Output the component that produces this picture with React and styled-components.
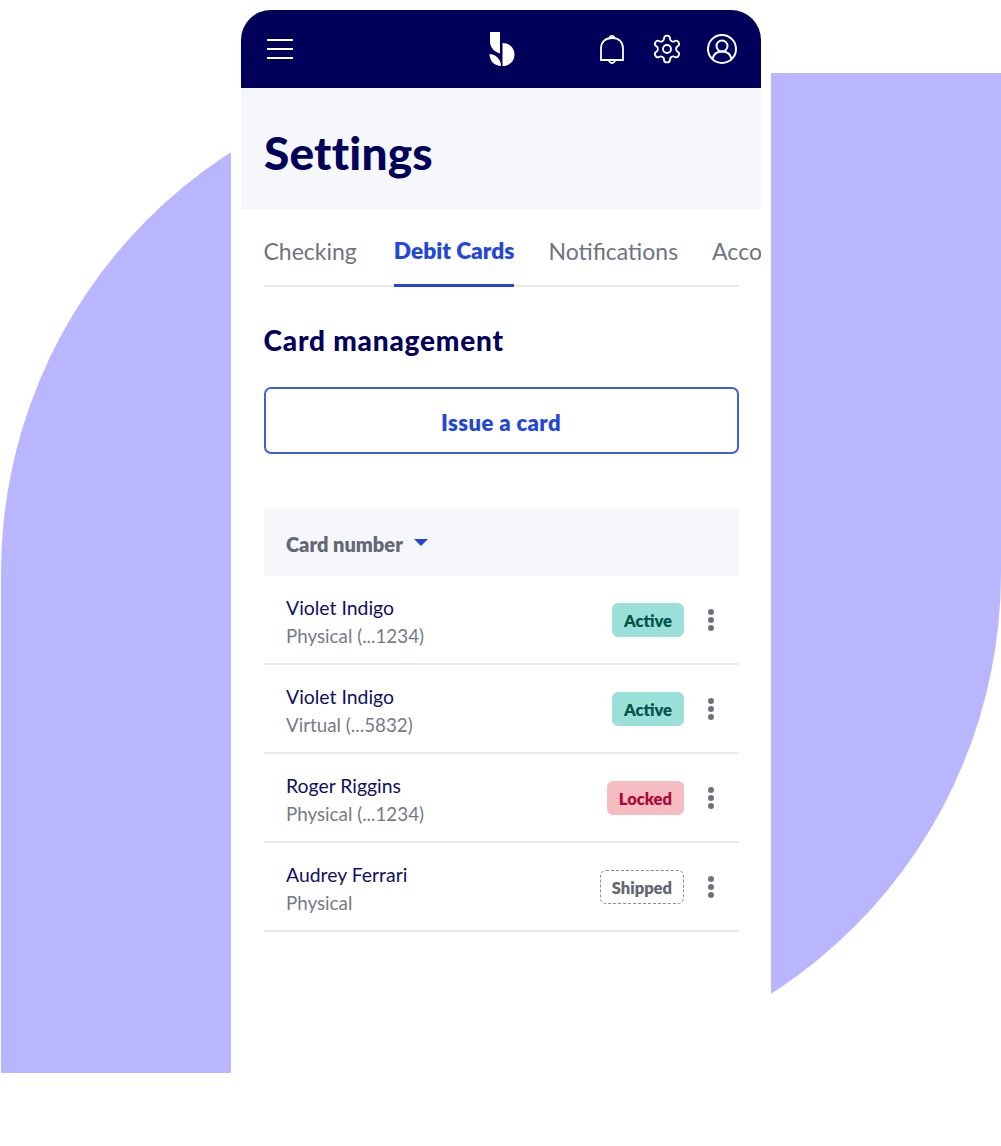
import React from "react";
import styled, { createGlobalStyle } from "styled-components";

const GlobalStyle = createGlobalStyle`
  html, body {
    margin: 0;
    padding: 0;
    background: #fff;
    font-family: "Lato", "Liberation Sans", sans-serif;
  }
`;

const Stage = styled.div`
  position: relative;
  width: 1001px;
  height: 1146px;
  overflow: hidden;
  background: #fff;
`;

const Blob = styled.div`
  position: absolute;
  left: 1px;
  top: 73px;
  width: 1000px;
  height: 1000px;
  border-radius: 500px 0 500px 0;
  background: #b9b6ff;
`;

const Phone = styled.div`
  position: relative;
  box-sizing: border-box;
  width: 540px;
  height: 1146px;
  margin-left: 231px;
  padding: 10px 10px 0;
  background: #fff;
  border-radius: 40px;
`;

const TopBar = styled.header`
  display: grid;
  grid-template-columns: 1fr auto 1fr;
  align-items: center;
  box-sizing: border-box;
  height: 78px;
  padding: 0 24px 0 26px;
  background: #00005a;
  border-radius: 30px 30px 0 0;
`;

const Actions = styled.div`
  display: flex;
  align-items: center;
  justify-content: flex-end;
  gap: 24px;
`;

const Glyph = styled.svg`
  display: block;
  fill: none;
  stroke: #fff;
  stroke-width: ${(p) => p.$weight || 2};
`;

const Bell = styled(Glyph)`
  margin-right: 3px;
`;

const TitleBand = styled.div`
  box-sizing: border-box;
  height: 121px;
  padding: 8px 23px 0;
  display: flex;
  align-items: center;
  background: #f5f7fb;
`;

const Title = styled.h1`
  margin: 0;
  font-size: 46px;
  font-weight: 900;
  letter-spacing: 0.2px;
  color: #00005a;
`;

const Body = styled.div`
  padding: 0 22.5px;
`;

const Tabs = styled.nav`
  display: flex;
  gap: 34px;
  height: 78px;
  margin-right: -22.5px;
  overflow: hidden;
`;

const TabRule = styled.div`
  height: 2px;
  margin-top: -2px;
  background: #e9eaee;
`;

const Tab = styled.div`
  flex: none;
  box-sizing: border-box;
  height: 78px;
  line-height: 84px;
  font-size: 23px;
  color: #6f7280;
  border-bottom: 3px solid transparent;

  &:first-child {
    margin-right: 3px;
  }
`;

const ActiveTab = styled(Tab)`
  position: relative;
  z-index: 1;
  font-size: 22.700px;
  font-weight: 800;
  color: #2347d6;
  border-bottom-color: #2347d6;
`;

const SectionTitle = styled.h2`
  margin: 35px 0 29px;
  font-size: 28px;
  line-height: 36px;
  font-weight: 900;
  letter-spacing: 0.8px;
  color: #00005a;
`;

const IssueButton = styled.button`
  display: block;
  box-sizing: border-box;
  width: 100%;
  height: 67px;
  padding: 3px 0 0;
  font-family: inherit;
  font-size: 22px;
  font-weight: 800;
  letter-spacing: 0.4px;
  color: #2347d6;
  background: #fff;
  border: 2px solid #3f5fd6;
  border-radius: 7px;
`;

const TableHead = styled.div`
  display: flex;
  align-items: center;
  gap: 11px;
  box-sizing: border-box;
  height: 67px;
  margin-top: 55px;
  padding: 2px 22.5px 0;
  background: #f5f7fb;
  font-size: 20px;
  font-weight: 800;
  color: #636674;
`;

const Caret = styled.span`
  width: 0;
  height: 0;
  border-left: 7px solid transparent;
  border-right: 7px solid transparent;
  border-top: 7px solid #2347d6;
  margin-top: -3px;
`;

const Row = styled.div`
  display: flex;
  align-items: center;
  box-sizing: border-box;
  height: 89px;
  padding: 0 22px 0 22.5px;
  border-bottom: 2px solid #e9eaee;
`;

const Who = styled.div`
  flex: 1;
  padding-top: 4px;
`;

const Name = styled.div`
  font-size: 19.400px;
  line-height: 28px;
  color: #10105f;
`;

const Kind = styled.div`
  font-size: 18.800px;
  line-height: 28px;
  color: #777a86;
`;

const tones = {
  active: "background: #9be0d8; color: #00544a; border: 1px solid #9be0d8;",
  locked: "background: #f5bcc2; color: #ab0a38; border: 1px solid #f5bcc2;",
  shipped: "background: #fff; color: #636674; border: 1px dashed #8a8c96;",
};

const Badge = styled.span`
  box-sizing: border-box;
  height: 34px;
  line-height: 34px;
  padding: 0 10.500px;
  border-radius: 6px;
  font-size: 16.500px;
  font-weight: 800;
  ${(p) => tones[p.$tone]}
`;

const Kebab = styled.div`
  display: flex;
  flex-direction: column;
  gap: 2px;
  margin-left: 21px;
  width: 12px;
  align-items: center;
`;

const Dot = styled.i`
  display: block;
  width: 6px;
  height: 6px;
  border-radius: 50%;
  background: #6f7080;
`;

const rows = [
  { name: "Violet Indigo", kind: "Physical (...1234)", tone: "active", status: "Active" },
  { name: "Violet Indigo", kind: "Virtual (...5832)", tone: "active", status: "Active" },
  { name: "Roger Riggins", kind: "Physical (...1234)", tone: "locked", status: "Locked" },
  { name: "Audrey Ferrari", kind: "Physical", tone: "shipped", status: "Shipped" },
];

const App = () => {
  return (
    <Stage>
      <GlobalStyle />
      <Blob />
      <Phone>
        <TopBar>
          <Glyph width="26" height="22" viewBox="0 0 26 22">
            <path d="M0 2h26M0 11h26M0 20h26" />
          </Glyph>
          <svg width="26" height="34" viewBox="0 0 26 34">
            <path fill="#fff" d="M1 0h10v21.500C5.500 20 1 15.500 1 9.500z" />
            <path fill="#fff" d="M0.500 22C6.500 22 12 27 12 34C5.500 34 0.500 29 0.500 22z" />
            <path fill="#fff" d="M13.500 11C20.500 11 25.500 16 25.500 22.500C25.500 29 20.500 34 13.500 34z" />
          </svg>
          <Actions>
            <Bell width="24" height="31" viewBox="0 0 24 31" $weight={1.8}>
              <path d="M1 26V14.500C1 8 5 4 12 4s11 4 11 10.500V26z" />
              <path d="M9.500 4.200C10 1 14 1 14.500 4.200M9 26c.5 4 5.500 4 6 0" />
            </Bell>
            <Glyph width="32" height="32" viewBox="0 0 24 24" $weight={1.4}>
              <circle cx="12" cy="12" r="3" />
              <path d="M12.220 2h-.44a2 2 0 0 0-2 2v.18a2 2 0 0 1-1 1.730l-.43.250a2 2 0 0 1-2 0l-.15-.080a2 2 0 0 0-2.730.730l-.22.380a2 2 0 0 0 .730 2.730l.15.100a2 2 0 0 1 1 1.720v.510a2 2 0 0 1-1 1.740l-.15.090a2 2 0 0 0-.730 2.730l.22.380a2 2 0 0 0 2.730.730l.15-.080a2 2 0 0 1 2 0l.43.250a2 2 0 0 1 1 1.730V20a2 2 0 0 0 2 2h.44a2 2 0 0 0 2-2v-.18a2 2 0 0 1 1-1.730l.43-.250a2 2 0 0 1 2 0l.15.080a2 2 0 0 0 2.730-.730l.22-.390a2 2 0 0 0-.730-2.730l-.15-.080a2 2 0 0 1-1-1.740v-.500a2 2 0 0 1 1-1.740l.15-.090a2 2 0 0 0 .730-2.730l-.22-.380a2 2 0 0 0-2.730-.730l-.15.080a2 2 0 0 1-2 0l-.43-.250a2 2 0 0 1-1-1.730V4a2 2 0 0 0-2-2z" />
            </Glyph>
            <Glyph width="30" height="30" viewBox="0 0 30 30">
              <circle cx="15" cy="15" r="14" />
              <circle cx="15" cy="12" r="5.500" />
              <path d="M5.500 25c1-5 5-7.500 9.500-7.500s8.500 2.500 9.500 7.500" />
            </Glyph>
          </Actions>
        </TopBar>
        <TitleBand>
          <Title>Settings</Title>
        </TitleBand>
        <Body>
          <Tabs>
            <Tab>Checking</Tab>
            <ActiveTab>Debit Cards</ActiveTab>
            <Tab>Notifications</Tab>
            <Tab>Account</Tab>
          </Tabs>
          <TabRule />
          <SectionTitle>Card management</SectionTitle>
          <IssueButton>Issue a card</IssueButton>
          <TableHead>
            Card number
            <Caret />
          </TableHead>
          {rows.map((row, i) => (
            <Row key={i}>
              <Who>
                <Name>{row.name}</Name>
                <Kind>{row.kind}</Kind>
              </Who>
              <Badge $tone={row.tone}>{row.status}</Badge>
              <Kebab>
                <Dot />
                <Dot />
                <Dot />
              </Kebab>
            </Row>
          ))}
        </Body>
      </Phone>
    </Stage>
  );
};

export default App;
